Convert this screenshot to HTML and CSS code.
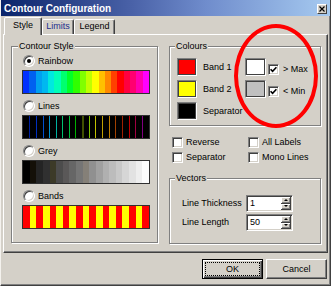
FILE: index.html
```html
<!DOCTYPE html>
<html>
<head>
<meta charset="utf-8">
<title>Contour Configuration</title>
<link rel="stylesheet" href="styles.css">
</head>
<body>
<div class="window">
  <div class="titlebar">
    <span class="title">Contour Configuration</span>
    <span class="close"><svg width="6" height="6" viewBox="0 0 6 6"><path d="M0.5 0.5 L5.5 5.5 M5.5 0.5 L0.5 5.5" stroke="#000" stroke-width="1.2"/></svg></span>
  </div>
  <div class="client">
    <div class="tabs">
      <div class="tab active">Style</div>
      <div class="tab limits">Limits</div>
      <div class="tab legend-tab">Legend</div>
    </div>
    <div class="panel">
      <fieldset class="group contour">
        <legend>Contour Style</legend>
        <div class="option">
          <div class="radio-row"><span class="radio checked"></span>Rainbow</div>
          <div class="bar rainbow"></div>
        </div>
        <div class="option">
          <div class="radio-row"><span class="radio"></span>Lines</div>
          <div class="bar lines"></div>
        </div>
        <div class="option">
          <div class="radio-row"><span class="radio"></span>Grey</div>
          <div class="bar grey"></div>
        </div>
        <div class="option">
          <div class="radio-row"><span class="radio"></span>Bands</div>
          <div class="bar bands"></div>
        </div>
      </fieldset>
      <div class="rightcol">
        <fieldset class="group colours">
          <legend>Colours</legend>
          <div class="crow">
            <span class="swatch red"></span><span class="clabel">Band 1</span>
            <span class="swatch wide white"></span>
            <span class="check on"><svg width="7" height="7" viewBox="0 0 7 7"><path d="M0.6 3.2 L2.6 5.3 L6.4 1.2" fill="none" stroke="#000" stroke-width="1.6"/></svg></span>
            <span class="ctext">&gt; Max</span>
          </div>
          <div class="crow">
            <span class="swatch yellow"></span><span class="clabel">Band 2</span>
            <span class="swatch wide silver"></span>
            <span class="check on"><svg width="7" height="7" viewBox="0 0 7 7"><path d="M0.6 3.2 L2.6 5.3 L6.4 1.2" fill="none" stroke="#000" stroke-width="1.6"/></svg></span>
            <span class="ctext">&lt; Min</span>
          </div>
          <div class="crow">
            <span class="swatch black"></span><span class="clabel">Separator</span>
          </div>
        </fieldset>
        <div class="checks">
          <div class="chk"><span class="check"></span>Reverse</div>
          <div class="chk"><span class="check"></span>All Labels</div>
          <div class="chk"><span class="check"></span>Separator</div>
          <div class="chk"><span class="check"></span>Mono Lines</div>
        </div>
        <fieldset class="group vectors">
          <legend>Vectors</legend>
          <div class="vrow">
            <span class="vlabel">Line Thickness</span>
            <div class="spin"><span class="spin-val">1</span><span class="spin-btns"><span class="up"></span><span class="down"></span></span></div>
          </div>
          <div class="vrow">
            <span class="vlabel">Line Length</span>
            <div class="spin"><span class="spin-val">50</span><span class="spin-btns"><span class="up"></span><span class="down"></span></span></div>
          </div>
        </fieldset>
      </div>
    </div>
    <div class="buttons">
      <button class="btn default"><span class="focus">OK</span></button>
      <button class="btn">Cancel</button>
    </div>
  </div>
  <div class="highlight"></div>
</div>
</body>
</html>
```
FILE: styles.css
```css
body {
  margin: 0;
  background: #d4d0c8;
  font-family: "Liberation Sans", Arial, sans-serif;
  font-size: 9px;
  line-height: 11px;
  color: #000;
}

.window {
  position: relative;
  width: 331px;
  height: 286px;
  box-sizing: border-box;
  border-left: 1px solid #f4f2ee;
  border-right: 1px solid #404040;
  border-bottom: 1px solid #404040;
  box-shadow: inset -1px -1px 0 #808080;
  background: #d4d0c8;
}

.titlebar {
  height: 16px;
  display: flex;
  align-items: center;
  justify-content: space-between;
  padding: 0 3px;
  background: linear-gradient(to right, #0a246a 0%, #4a62a8 40%, #6f8ccc 62%, #a6caf0 100%);
  color: #fff;
  font-weight: bold;
  font-size: 10px;
}

.close {
  width: 10px;
  height: 10px;
  margin-top: 1px;
  box-sizing: border-box;
  background: #d4d0c8;
  border: 1px solid;
  border-color: #fff #404040 #404040 #fff;
  display: flex;
  align-items: center;
  justify-content: center;
}

.client {
  padding: 1px 2px 0;
}

.tabs {
  display: flex;
  align-items: flex-end;
  height: 17px;
  padding-left: 1px;
}

.tab {
  height: 15px;
  box-sizing: border-box;
  border: 1px solid;
  border-bottom: none;
  border-color: #fff #404040 transparent #fff;
  border-radius: 2px 2px 0 0;
  box-shadow: inset -1px 0 0 #808080;
  text-align: center;
  line-height: 13px;
  background: #d4d0c8;
}

.tab.active {
  width: 38px;
  height: 18px;
  margin-bottom: -1px;
  position: relative;
  z-index: 1;
  line-height: 15px;
}

.tab.limits {
  width: 32px;
  color: #1c2f8c;
}

.tab.legend-tab {
  width: 41px;
}

.panel {
  height: 219px;
  box-sizing: border-box;
  border: 1px solid;
  border-color: #fff #404040 #404040 #fff;
  box-shadow: inset -1px -1px 0 #808080;
  padding: 6px 6px 0 7px;
  display: flex;
  align-items: flex-start;
  gap: 11px;
}

.group {
  margin: 0;
  padding: 0;
  min-width: 0;
  box-sizing: border-box;
  border: 1px solid #808080;
  box-shadow: inset 1px 1px 0 #fff, 1px 1px 0 #fff;
}

.group legend {
  padding: 0 1px;
  background: #d4d0c8;
  line-height: 11px;
}

.contour {
  width: 147px;
  padding: 3px 0 13px 10px;
}

.contour legend {
  margin-left: -4px;
}

.option {
  display: flex;
  flex-direction: column;
}

.option + .option {
  margin-top: 6px;
}

.radio-row {
  display: flex;
  align-items: center;
  height: 12px;
}

.radio {
  position: relative;
  width: 12px;
  height: 12px;
  margin: 0 3px 0 1px;
  box-sizing: border-box;
  border-radius: 50%;
  background: #fff;
  border: 1px solid;
  border-color: #808080 #fff #fff #808080;
  box-shadow: inset 1px 1px 0 #404040, inset -1px -1px 0 #d4d0c8;
  flex: none;
}

.radio.checked::after {
  content: "";
  position: absolute;
  left: 3px;
  top: 3px;
  width: 4px;
  height: 4px;
  border-radius: 50%;
  background: #000;
}

.bar {
  width: 128px;
  height: 24px;
  margin-top: 3px;
  box-sizing: border-box;
  border: 1px solid #303030;
}

.rainbow {
  background: linear-gradient(to right,
    #0030ff 0 5%, #0060f0 5% 10%, #00a0f0 10% 15%, #00b8f0 15% 20%,
    #00e8e0 20% 25%, #00ffb8 25% 30%, #00ff70 30% 35%, #00ff28 35% 40%,
    #30ff00 40% 45%, #80ff00 45% 50%, #c0ff00 50% 55%, #ffff00 55% 60%,
    #ffc000 60% 65%, #ff8800 65% 70%, #ff4000 70% 75%, #ff0000 75% 80%,
    #ff0040 80% 85%, #ff0070 85% 90%, #ff00b0 90% 95%, #ff00ff 95% 100%);
}

.lines {
  background: linear-gradient(to right,
    #000 0 6px, #0020a0 6px 7px,
    #000 7px 13px, #0030c0 13px 14px,
    #000 14px 20px, #0050d0 20px 21px,
    #000 21px 26px, #0090d0 26px 27px,
    #000 27px 33px, #00b0a0 33px 34px,
    #000 34px 39px, #00c070 39px 40px,
    #000 40px 46px, #00c040 46px 47px,
    #000 47px 52px, #00b000 52px 53px,
    #000 53px 59px, #405000 59px 61px,
    #000 61px 66px, #80c000 66px 67px,
    #000 67px 72px, #c0c000 72px 73px,
    #000 73px 79px, #c0a000 79px 80px,
    #000 80px 86px, #c08000 86px 87px,
    #000 87px 92px, #a04000 92px 93px,
    #000 93px 99px, #a02000 99px 100px,
    #000 100px 106px, #c00000 106px 107px,
    #000 107px 112px, #a00040 112px 113px,
    #000 113px 119px, #800080 119px 120px,
    #000 120px 126px);
}

.grey {
  background: linear-gradient(to right,
    #000 0 5.26%, #141008 5.26% 10.53%, #242424 10.53% 15.79%, #303030 15.79% 21.05%,
    #3c3a28 21.05% 26.32%, #4c4c4c 26.32% 31.58%, #5a5858 31.58% 36.84%, #666 36.84% 42.11%,
    #757575 42.11% 47.37%, #858078 47.37% 52.63%, #909090 52.63% 57.89%, #a0a0a0 57.89% 63.16%,
    #b0b0b0 63.16% 68.42%, #bcbcbc 68.42% 73.68%, #c8c8c8 73.68% 78.95%, #d6d6d6 78.95% 84.21%,
    #e2e2e2 84.21% 89.47%, #eeeeee 89.47% 94.74%, #fcfcfc 94.74% 100%);
}

.bands {
  background: repeating-linear-gradient(to right, #ff0000 0 6.63px, #ffff00 6.63px 13.26px);
}

.rightcol {
  width: 152px;
  display: flex;
  flex-direction: column;
}

.colours {
  padding: 6px 0 5px 7px;
}

.colours legend {
  margin-left: -2px;
}

.crow {
  display: flex;
  align-items: center;
  height: 18px;
}

.crow + .crow {
  margin-top: 4px;
}

.swatch {
  width: 20px;
  height: 18px;
  box-sizing: border-box;
  border: 1px solid;
  border-color: #808080 #fff #fff #808080;
  box-shadow: inset 0 0 0 1px #404040;
  flex: none;
}

.swatch.wide { width: 21px; }
.swatch.red { background: #ff0000; }
.swatch.yellow { background: #ffff00; }
.swatch.black { background: #000; }
.swatch.white { background: #fff; }
.swatch.silver { background: #c0c0c0; }

.clabel {
  margin-left: 6px;
  width: 42px;
  white-space: nowrap;
}

.crow .check {
  margin-left: 2px;
  margin-top: 4px;
}

.ctext {
  margin-left: 4px;
  margin-top: 4px;
}

.check {
  width: 11px;
  height: 11px;
  box-sizing: border-box;
  background: #fff;
  border: 1px solid;
  border-color: #808080 #fff #fff #808080;
  box-shadow: inset 1px 1px 0 #404040, inset -1px -1px 0 #d4d0c8;
  display: flex;
  align-items: center;
  justify-content: center;
  flex: none;
}

.checks {
  display: grid;
  grid-template-columns: 76px 1fr;
  row-gap: 4px;
  margin: 11px 0 0 3px;
}

.chk {
  display: flex;
  align-items: center;
  height: 11px;
}

.chk .check {
  margin-right: 3px;
}

.vectors {
  margin-top: 10px;
  padding: 11px 0 12px 12px;
}

.vectors legend {
  margin-left: -7px;
}

.vrow {
  display: flex;
  align-items: center;
  height: 17px;
}

.vrow + .vrow {
  margin-top: 2px;
}

.vlabel {
  width: 64px;
  white-space: nowrap;
}

.spin {
  width: 47px;
  height: 17px;
  box-sizing: border-box;
  display: flex;
  background: #fff;
  border: 1px solid;
  border-color: #808080 #fff #fff #808080;
  box-shadow: inset 1px 1px 0 #404040, inset -1px -1px 0 #d4d0c8;
  padding: 1px 1px 1px 1px;
}

.spin-val {
  flex: 1;
  padding-left: 2px;
  line-height: 13px;
}

.spin-btns {
  width: 10px;
  display: flex;
  flex-direction: column;
}

.spin-btns span {
  flex: 1;
  box-sizing: border-box;
  background: #d4d0c8;
  border-right: 1px solid #404040;
  border-bottom: 1px solid #404040;
  box-shadow: inset 1px 1px 0 #fff, inset -1px -1px 0 #808080;
  display: flex;
  align-items: center;
  justify-content: center;
}

.spin-btns .up::after {
  content: "";
  border-left: 2px solid transparent;
  border-right: 2px solid transparent;
  border-bottom: 2px solid #000;
}

.spin-btns .down::after {
  content: "";
  border-left: 2px solid transparent;
  border-right: 2px solid transparent;
  border-top: 2px solid #000;
}

.buttons {
  display: flex;
  justify-content: flex-end;
  gap: 3px;
  margin-top: 6px;
  padding-right: 1px;
}

.btn {
  width: 61px;
  height: 20px;
  box-sizing: border-box;
  padding: 0;
  font: inherit;
  color: #000;
  background: #d4d0c8;
  border: 1px solid;
  border-color: #fff #404040 #404040 #fff;
  box-shadow: inset -1px -1px 0 #808080;
  display: flex;
  align-items: center;
  justify-content: center;
}

.btn.default {
  border-color: #000;
  box-shadow: inset 1px 1px 0 #fff, inset -1px -1px 0 #404040, inset -2px -2px 0 #808080;
}

.focus {
  flex: 1;
  align-self: stretch;
  margin: 2px 2px 2px 2px;
  border: 1px dotted #000;
  display: flex;
  align-items: center;
  justify-content: center;
}

.highlight {
  position: absolute;
  left: 233px;
  top: 24px;
  width: 84px;
  height: 104px;
  box-sizing: border-box;
  border: 4px solid #ff0000;
  border-radius: 50%;
  pointer-events: none;
}
```
